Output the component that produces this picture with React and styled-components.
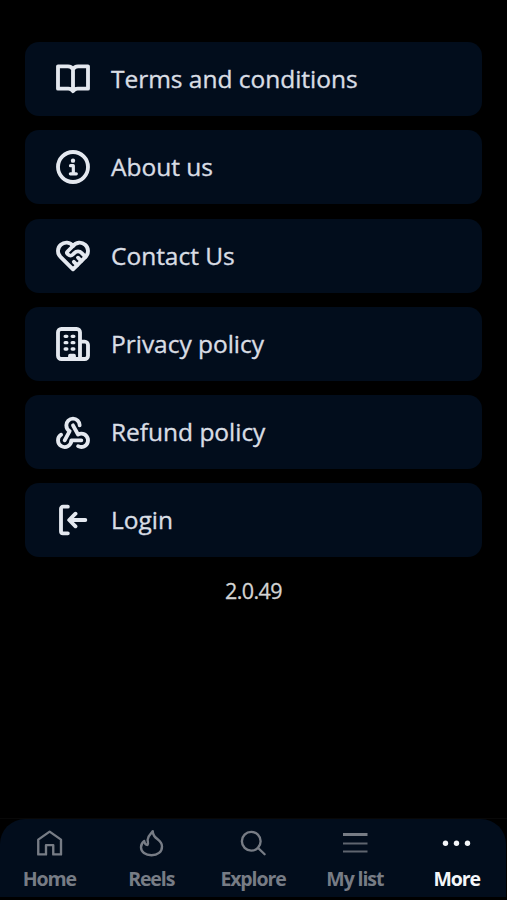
import * as React from 'react';
import { useState } from 'react';
import styled, { createGlobalStyle } from 'styled-components';
import { TbHeartHandshake, TbWebhook } from 'react-icons/tb';

const GlobalStyle = createGlobalStyle`
  * {
    box-sizing: border-box;
  }
  body {
    margin: 0;
    background: #000;
    font-family: "Open Sans", "Noto Sans", sans-serif;
  }
`;

const Page = styled.div`
  display: flex;
  flex-direction: column;
  height: 100vh;
  padding-bottom: 3px;
  overflow: hidden;
  background: #000;
`;

const Menu = styled.main`
  display: flex;
  flex: 1;
  flex-direction: column;
  gap: 14.1px;
  padding: 42.4px 25px 0;
`;

const MenuItem = styled.a`
  display: flex;
  align-items: center;
  gap: 18px;
  height: 74px;
  padding: 0 0 0 28px;
  border-radius: 14px;
  background: #020d1c;
  color: #d9dde4;
  font-size: 24.5px;
  line-height: 32px;
  letter-spacing: -0.02px;
  -webkit-text-stroke: 0.35px currentColor;
  cursor: pointer;

  svg {
    flex: none;
    width: 40px;
    height: 40px;
    color: #e4e8ef;
    stroke-width: 2.3px;
  }
`;

const Version = styled.p`
  margin: 5px 0 0;
  color: #d4d4d4;
  font-size: 21.5px;
  line-height: 30px;
  letter-spacing: -0.6px;
  text-align: center;
  -webkit-text-stroke: 0.3px currentColor;
`;

const TabArea = styled.div`
  padding-right: 1px;
  border-top: 1px solid #080808;
`;

const TabBar = styled.nav`
  display: flex;
  justify-content: center;
  height: 78px;
  border-radius: 25px 25px 0 0;
  background: #020d1c;
  overflow: hidden;
`;

const Tab = styled.button`
  display: flex;
  flex: 0 0 101.8px;
  flex-direction: column;
  align-items: center;
  gap: 9px;
  padding: 9px 0 0;
  border: 0;
  background: none;
  color: ${props => (props.$active ? '#f4f6f9' : '#777c85')};
  font-family: inherit;
  font-size: 19.5px;
  font-weight: 700;
  line-height: 24px;
  letter-spacing: -1.1px;
  white-space: nowrap;

  svg {
    width: 30px;
    height: 30px;
  }
`;

const Icon = ({ children, width }) => (
  <svg viewBox="0 0 24 24" fill="none" stroke="currentColor" strokeWidth={width} strokeLinecap="round" strokeLinejoin="round">
    {children}
  </svg>
);

const BookIcon = () => (
  <Icon>
    <path d="M12 6.2C11.4 5 10.4 4.4 9 4.4H3v13.4h6.2c1.2 0 2.1.4 2.8 1.5.7-1.1 1.6-1.5 2.8-1.5H21V4.4h-6c-1.4 0-2.4.6-3 1.8zM12 6.2v13" />
  </Icon>
);

const InfoIcon = () => (
  <Icon>
    <circle cx="12" cy="12" r="9" />
    <path d="M10.5 11.2h1.7v4.9M10.4 16.1h3.6" strokeWidth="1.9" />
    <circle cx="12" cy="8.2" r="1.3" fill="currentColor" stroke="none" />
  </Icon>
);

const BuildingIcon = () => (
  <Icon>
    <path d="M10.2 21v-2h2.4v2M16.2 21V5a2 2 0 0 0-2-2H5a2 2 0 0 0-2 2v14a2 2 0 0 0 2 2h14a2 2 0 0 0 2-2v-6.4a2 2 0 0 0-2-2h-2.3" />
    <path d="M7.3 7.4h1M11.5 7.4h1M7.3 11.2h1M11.5 11.2h1M7.3 15h1M11.5 15h1" strokeWidth="2" />
  </Icon>
);

const LoginIcon = () => (
  <Icon>
    <path d="M8.9 4H6a1.2 1.2 0 0 0-1.2 1.2v13.6A1.2 1.2 0 0 0 6 20h2.9M19.4 12H10.4M13.5 8.2 9.7 12l3.8 3.8" />
  </Icon>
);

const HomeIcon = () => (
  <Icon width={1.9}>
    <path d="M3.4 9.3 12.5 2.9l9.1 6.4v11.8h-6.2v-7.4H9.6v7.4H3.4z" />
  </Icon>
);

const FlameIcon = () => (
  <Icon width={1.9}>
    <path d="M13.4 2.5c-1.2 2.3-4.1 3.4-4.1 6.9 0 1.7.9 3.1-.1 4.2-1.6 0-2.4-1.3-2.6-3.2-1.6 1.2-2.6 3-2.6 5 0 3.8 3.5 6.4 8.4 6.4s8.4-2.7 8.4-7.1c0-4.6-4.2-5.3-6.2-8.3-.8-1.2-1.2-2.4-1.2-3.9z" />
  </Icon>
);

const SearchIcon = () => (
  <Icon width={1.9}>
    <circle cx="10.6" cy="10.6" r="7.5" />
    <path d="m16.1 16 5.2 5" />
  </Icon>
);

const ListIcon = () => (
  <Icon>
    <path d="M2.4 5.2h19.6" strokeWidth="2.4" strokeLinecap="butt" />
    <path d="M2.4 12.4h19.6M2.4 18.8h19.6" strokeWidth="1.6" strokeLinecap="butt" opacity=".8" />
  </Icon>
);

const MoreIcon = () => (
  <svg viewBox="0 0 24 24" fill="currentColor">
    <circle cx="2.8" cy="12.2" r="2.15" />
    <circle cx="11.6" cy="12.2" r="2.15" />
    <circle cx="20.4" cy="12.2" r="2.15" />
  </svg>
);

const links = [
  { label: 'Terms and conditions', icon: <BookIcon /> },
  { label: 'About us', icon: <InfoIcon /> },
  { label: 'Contact Us', icon: <TbHeartHandshake /> },
  { label: 'Privacy policy', icon: <BuildingIcon /> },
  { label: 'Refund policy', icon: <TbWebhook /> },
  { label: 'Login', icon: <LoginIcon /> },
];

const tabs = [
  { label: 'Home', icon: <HomeIcon /> },
  { label: 'Reels', icon: <FlameIcon /> },
  { label: 'Explore', icon: <SearchIcon /> },
  { label: 'My list', icon: <ListIcon /> },
  { label: 'More', icon: <MoreIcon /> },
];

const App = () => {
  const [active, setActive] = useState('More');

  return (
    <Page>
      <GlobalStyle />
      <Menu>
        {links.map(link => (
          <MenuItem key={link.label}>
            {link.icon}
            <span>{link.label}</span>
          </MenuItem>
        ))}
        <Version>2.0.49</Version>
      </Menu>
      <TabArea>
        <TabBar>
          {tabs.map(tab => (
            <Tab key={tab.label} $active={tab.label === active} onClick={() => setActive(tab.label)}>
              {tab.icon}
              <span>{tab.label}</span>
            </Tab>
          ))}
        </TabBar>
      </TabArea>
    </Page>
  );
};

export default App;
